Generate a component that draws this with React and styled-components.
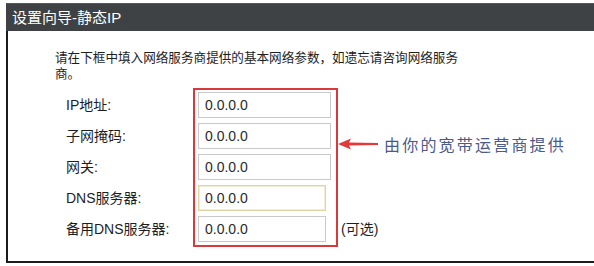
import React from "react";
import styled, { createGlobalStyle } from "styled-components";

const GlobalStyle = createGlobalStyle`
  body {
    margin: 0;
    background: #ffffff;
    font-family: "Liberation Sans", "Noto Sans CJK SC", sans-serif;
  }
`;

const fields = [
  { label: "IP地址:", value: "0.0.0.0" },
  { label: "子网掩码:", value: "0.0.0.0" },
  { label: "网关:", value: "0.0.0.0" },
  { label: "DNS服务器:", value: "0.0.0.0", focused: true },
  { label: "备用DNS服务器:", value: "0.0.0.0", narrow: true },
];

const Window = styled.div`
  width: 588px;
  margin: 3px 0 0 6px;
  height: 260px;
  display: flex;
  flex-direction: column;
`;

const Header = styled.div`
  height: 28px;
  background: #3e4244;
  border-top: 1px solid #55595b;
  box-sizing: border-box;
  color: #ffffff;
  font-size: 15px;
  line-height: 27px;
  padding-left: 6px;
`;

const Body = styled.div`
  flex: 1;
  border-left: 2px solid #1c1c1c;
  border-bottom: 2px solid #1c1c1c;
  padding: 19px 0 0 47px;
`;

const Intro = styled.p`
  margin: 0;
  width: 410px;
  font-size: 12.6px;
  line-height: 16px;
  color: #1e1e1e;
`;

const Form = styled.div`
  display: flex;
  align-items: flex-start;
  margin: 6px 0 0 11px;
`;

const Labels = styled.div`
  width: 127px;
  padding-top: 4px;
  display: flex;
  flex-direction: column;
`;

const Label = styled.div`
  height: 31px;
  line-height: 26px;
  font-size: 14px;
  color: #1e1e1e;
`;

const Highlight = styled.div`
  border: 2.5px solid #d8393b;
  padding: 2px 5px 3px 3px;
  display: flex;
  flex-direction: column;
  gap: 5px;
`;

const Field = styled.div`
  width: ${(p) => (p.$narrow || p.$focused ? "128px" : "133px")};
  height: 26px;
  box-sizing: border-box;
  border: 1px solid ${(p) => (p.$focused ? "#e0d3a4" : "#c9c9c9")};
  box-shadow: ${(p) => (p.$focused ? "inset 0 0 0 1px #f3ecd2" : "none")};
  background: #ffffff;
  padding-left: 6px;
  font-size: 14px;
  line-height: 24px;
  color: #2a2a2a;
`;

const Callout = styled.div`
  display: flex;
  align-items: center;
  gap: 6px;
  margin-top: 44px;
`;

const CalloutText = styled.span`
  font-family: "Noto Sans CJK SC", sans-serif;
  font-size: 16px;
  letter-spacing: 2.2px;
  color: #4c5a88;
`;

const Optional = styled.div`
  margin: 62px 0 0 3px;
  font-size: 14px;
  color: #1e1e1e;
`;

const Arrow = () => (
  <svg width="40" height="12" viewBox="0 0 40 12">
    <path d="M0 6 L13 0.5 L11 4.5 L40 5 L40 7 L11 7.5 L13 11.5 Z" fill="#e2393b" />
  </svg>
);

export default function App() {
  return (
    <>
      <GlobalStyle />
      <Window>
        <Header>设置向导-静态IP</Header>
        <Body>
          <Intro>
            请在下框中填入网络服务商提供的基本网络参数，如遗忘请咨询网络服务商。
          </Intro>
          <Form>
            <Labels>
              {fields.map((f) => (
                <Label key={f.label}>{f.label}</Label>
              ))}
            </Labels>
            <Highlight>
              {fields.map((f) => (
                <Field key={f.label} $focused={f.focused} $narrow={f.narrow}>
                  {f.value}
                </Field>
              ))}
            </Highlight>
            <div>
              <Callout>
                <Arrow />
                <CalloutText>由你的宽带运营商提供</CalloutText>
              </Callout>
              <Optional>(可选)</Optional>
            </div>
          </Form>
        </Body>
      </Window>
    </>
  );
}
